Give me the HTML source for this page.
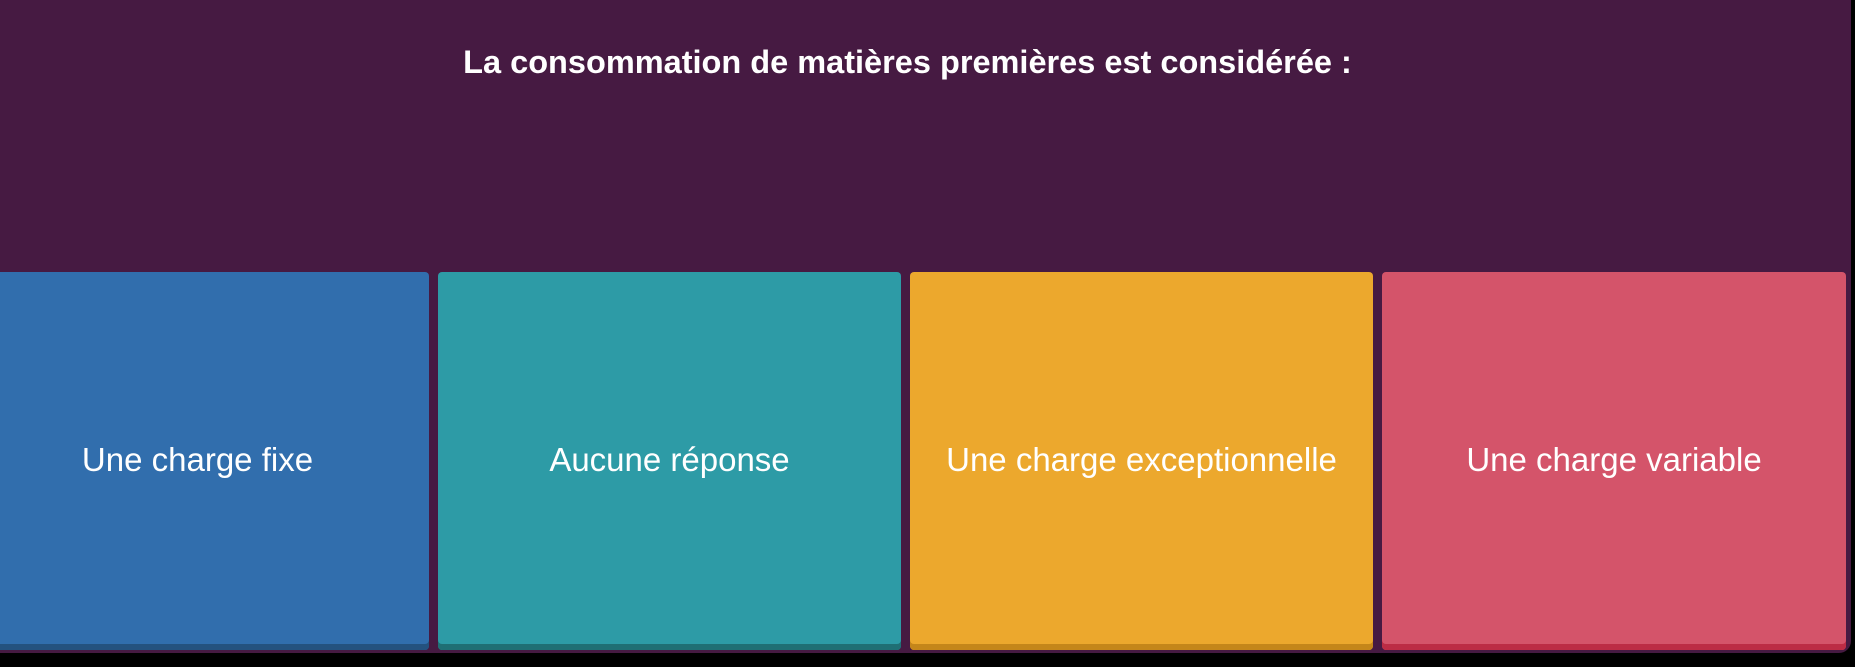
<!DOCTYPE html>
<html><head><meta charset="utf-8"><style>
html,body{margin:0;padding:0;background:#000;width:1855px;height:667px;overflow:hidden;font-family:"Liberation Sans",sans-serif}
.frame{position:absolute;left:0;top:0;width:1851px;height:653px;background:#461a42;border-bottom-right-radius:12px}
.title{position:absolute;left:0;width:1815px;top:44px;text-align:center;color:#fff;font-weight:bold;font-size:32.5px}
.card{position:absolute;top:272px;height:378px;width:463px;border-radius:4px;color:#fff;font-size:33px;display:flex;align-items:center;justify-content:center;box-sizing:border-box;padding-bottom:2px}
.c1{left:-34px;background:#316ead;box-shadow:inset 0 -6px 0 #24527f}
.c2{left:438px;background:#2d9ba6;box-shadow:inset 0 -6px 0 #1f6f74}
.c3{left:910px;background:#eca82d;box-shadow:inset 0 -6px 0 #c4861a}
.c4{left:1382px;width:464px;background:#d4546a;box-shadow:inset 0 -6px 0 #bc2c45}
</style></head><body>
<div class="frame">
<div class="title">La consommation de matières premières est considérée :</div>
<div class="card c1">Une charge fixe</div>
<div class="card c2">Aucune réponse</div>
<div class="card c3">Une charge exceptionnelle</div>
<div class="card c4">Une charge variable</div>
</div>
</body></html>
